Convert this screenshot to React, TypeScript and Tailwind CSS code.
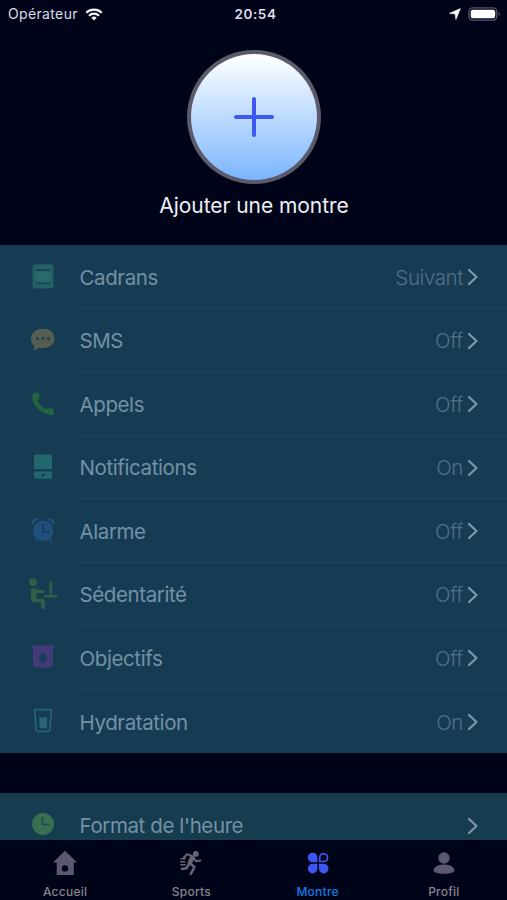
import type { ReactNode } from 'react'

type RowProps = {
  icon: ReactNode
  label: string
  value?: string
  last?: boolean
}

const DialIcon = () => (
  <svg viewBox="0 0 32 32" className="size-8">
    <rect x="5.5" y="3.2" width="21" height="24.3" rx="3.5" fill="#246067" />
    <rect x="8" y="11.5" width="16" height="9" rx="2" fill="#296b6c" />
    <path d="M9.500 9h13M9.500 22.300h13" stroke="#174753" strokeWidth="1.800" strokeLinecap="round" />
  </svg>
)

const SmsIcon = () => (
  <svg viewBox="0 0 32 32" className="size-8">
    <path d="M16 4.800c7 0 11.500 4 11.500 9.800S23 24 16 24c-1.600 0-2.600-.1-4-.5-1.700 1.600-3.300 2.600-5.500 3 .9-1.300 1.100-2.600 1-4.300C5.300 20.500 4 18 4 14.600 4 8.800 9 4.800 16 4.800z" fill="#535d52" />
    <g fill="#163c53">
      <circle cx="10.500" cy="14.600" r="1.400" />
      <circle cx="16" cy="14.600" r="1.400" />
      <circle cx="21.500" cy="14.600" r="1.400" />
    </g>
  </svg>
)

const CallIcon = () => (
  <svg viewBox="0 0 32 32" className="size-8">
    <path d="M6 6c1.500-1.800 4.500-2.300 5.700-.3 1.500 2.500 1.300 5-.9 6.800 1.200 4 4.200 7.300 8.600 8.600 1.900-1.500 5-1.600 7.300.2.400 1.300.7 3.900-.2 6-2.500-.4-5-.6-8.200-1.800C11.500 22.600 7 17.500 5.400 11.500c-.5-2-.4-4.300.6-5.500z" fill="#236440" />
  </svg>
)

const NotificationIcon = () => (
  <svg viewBox="0 0 32 32" className="size-8">
    <path d="M9 3.600h14a2 2 0 0 1 2 2V18H7V5.600a2 2 0 0 1 2-2zM7 20.500h18v5.300a2 2 0 0 1-2 2H9a2 2 0 0 1-2-2z" fill="#22666e" />
    <circle cx="16" cy="24" r="1.600" fill="#163c53" />
  </svg>
)

const AlarmIcon = () => (
  <svg viewBox="0 0 32 32" className="size-8">
    <path d="M6 8.500c-.6-2.600 2-4.600 4.800-3.700M26.400 8.500c.6-2.600-2-4.600-4.800-3.700" fill="none" stroke="#21567a" strokeWidth="2" strokeLinecap="round" />
    <circle cx="16.200" cy="16" r="10.200" fill="#204f7b" />
    <path d="M10 24 9 26M22.500 24l1 2" stroke="#204f7b" strokeWidth="2.200" strokeLinecap="round" />
    <path d="M16.200 9v7.800h6.500" fill="none" stroke="#163c5a" strokeWidth="1.700" />
  </svg>
)

const SedentaryIcon = () => (
  <svg viewBox="0 0 32 32" className="size-8">
    <circle cx="6" cy="4.200" r="3.900" fill="#315f45" />
    <path d="M4 10.500h5c1 0 1.500.8 2 1.500h6.500v3H9.500v6H16q1.700 0 1.700 1.700V31h-3.500v-6.800H6q-2 0-2-2z" fill="#315f45" />
    <path d="M23.700 4v13M18.500 18.200h11" stroke="#315f45" strokeWidth="2.500" strokeLinecap="round" />
  </svg>
)

const GoalIcon = () => (
  <svg viewBox="0 0 32 32" className="size-8">
    <path d="M5 3.600h22v2.400h-1V23q0 1.500-1.600 1.900l-5.400.4-3 1.200-3-1.200-5.400-.4Q6 24.500 6 23V6H5z" fill="#443a77" />
    <path d="m16 11 3.600 3v4.500L16 21.500l-3.600-3V14z" fill="#183c5c" />
  </svg>
)

const WaterIcon = () => (
  <svg viewBox="0 0 32 32" className="size-8">
    <path d="M7.700 4.700h16.600l-1.400 19.600q-.2 2.200-2.200 2.200h-9.400q-2 0-2.200-2.200z" fill="none" stroke="#24656f" strokeWidth="1.700" strokeLinejoin="round" />
    <path d="m12.200 12 4 .8 4-.8-.4 11.300h-7.200z" fill="#2a6474" />
  </svg>
)

const ClockIcon = () => (
  <svg viewBox="0 0 32 32" className="size-8">
    <circle cx="16" cy="15" r="11" fill="#3a6e50" />
    <path d="M15.500 8.500v7h6.500" fill="none" stroke="#1e4c4d" strokeWidth="1.700" strokeLinecap="round" />
  </svg>
)

const Chevron = () => (
  <svg viewBox="0 0 12 18" className="ml-1 mt-[2px] h-[18px] w-3">
    <path d="m2 2 7.500 7L2 16" fill="none" stroke="#7c99aa" strokeWidth="2.200" strokeLinecap="round" strokeLinejoin="round" />
  </svg>
)

const Row = ({ icon, label, value, last }: RowProps) => (
  <div className="flex h-[63.5px] shrink-0 pl-[27px]">
    <div className="flex w-[52.5px] items-center">{icon}</div>
    <div className={`flex flex-1 items-center justify-between pr-7 text-[20.5px] leading-7 tracking-[-0.4px] ${last ? '' : 'border-b border-[#1d4561]'}`}>
      <span className="pt-[3px] text-[#7391a5]">{label}</span>
      <span className="flex items-center font-light text-[#507086]">
        <span className="pt-[3px]">{value}</span>
        <Chevron />
      </span>
    </div>
  </div>
)

const Tab = ({ icon, label, active }: { icon: ReactNode; label: string; active?: boolean }) => (
  <button className="flex flex-1 flex-col items-center pt-[9px]">
    {icon}
    <span className={`mt-[7px] text-[12px] font-medium leading-4 tracking-[0.25px] ${active ? 'text-[#157bea]' : 'text-[#85858d]'}`}>{label}</span>
  </button>
)

const StatusBar = () => (
  <div className="grid h-7 grid-cols-3 items-center pl-2 pr-[6px] text-[13.5px] leading-5 text-[#d9dde8]">
    <div className="flex items-center">
      <span className="text-[14px] tracking-[0.350px]">Opérateur</span>
      <svg viewBox="0 0 18 13" className="ml-[7px] h-[13px] w-[18px]" fill="none" stroke="#f4f6fa" strokeWidth="2.200">
        <path d="M1.200 4.700a11.200 11.200 0 0 1 15.600 0M4 7.700a7.200 7.200 0 0 1 10 0" />
        <path d="m9 12.500-2.700-2.700a4 4 0 0 1 5.400 0z" fill="#f4f6fa" stroke="none" />
      </svg>
    </div>
    <span className="pl-[2px] text-center font-semibold tracking-[0.6px]">20:54</span>
    <div className="flex items-center justify-end">
      <svg viewBox="0 0 12 12" className="mr-[7px] size-3" fill="#fff" stroke="#fff" strokeWidth=".6" strokeLinejoin="round">
        <path d="M11.400.6 6.900 11.400 6.200 6 .6 5.300z" />
      </svg>
      <svg viewBox="0 0 33 14" className="h-[14px] w-[33px]">
        <rect x=".9" y=".9" width="28" height="12.200" rx="4" fill="none" stroke="#53576a" strokeWidth="1.400" />
        <rect x="2.700" y="2.700" width="24.500" height="8.600" rx="2.300" fill="#fff" />
        <path d="M30.800 5c1.500.6 1.500 3.400 0 4z" fill="#53576a" />
      </svg>
    </div>
  </div>
)

const HomeIcon = () => (
  <svg viewBox="0 0 28 28" className="size-7">
    <path fillRule="evenodd" d="M14 1.800 26.200 13.500H22.800V26H5.700V13.500H2zM14 16.200a3.200 3.200 0 1 0 0 6.400 3.200 3.200 0 0 0 0-6.400z" fill="#5c596f" />
  </svg>
)

const SportsIcon = () => (
  <svg viewBox="0 0 28 28" className="size-7" fill="none" stroke="#686576" strokeLinecap="round" strokeLinejoin="round">
    <circle cx="18.800" cy="4.900" r="2.900" fill="#686576" stroke="none" />
    <path d="M15.200 8.500 12.800 14" strokeWidth="4.500" />
    <path d="M14.500 6.800 9.800 5.300 7 8.500M16.800 9l2.200 3.200 4.500-.8" strokeWidth="2" />
    <path d="m13 14.500 4.500 3.500-3.800 7M11.500 15.500 9.500 19.300 5 20" strokeWidth="2.500" />
    <path d="M3.800 9.700h4.500M3.800 12.700h4M3.800 15.700h4.500" strokeWidth="1.400" />
  </svg>
)

const WatchIcon = () => (
  <svg viewBox="0 0 28 28" className="size-7" fill="#3f56f5">
    <path d="M13.400 13.300H8.600a4.800 4.800 0 1 1 4.800-4.800z" />
    <path d="M15.700 12.500V8.500a3.900 3.900 0 1 1 3.900 4z" fill="none" stroke="#3f56f5" strokeWidth="1.700" />
    <path d="M13.400 14.800v4.800a4.800 4.800 0 1 1-4.800-4.800zM14.900 14.800h4.800a4.800 4.800 0 1 1-4.800 4.800z" />
  </svg>
)

const ProfileIcon = () => (
  <svg viewBox="0 0 28 28" className="size-7" fill="#5c596f">
    <circle cx="14" cy="9" r="5.700" />
    <path d="M3.500 21.800c0-4 4.600-6.300 10.500-6.300s10.500 2.300 10.500 6.300c0 1.900-4.500 3-10.500 3s-10.500-1.100-10.500-3z" />
  </svg>
)

const App = () => (
  <div className="flex h-[900px] w-[507px] flex-col overflow-hidden bg-[#000418] font-['Inter','Liberation_Sans',sans-serif]">
    <StatusBar />
    <header className="flex h-[217px] shrink-0 flex-col items-center pt-[22px]">
      <button className="flex size-[134px] items-center justify-center rounded-full bg-[#5b5a6b] p-1">
        <span className="flex size-full items-center justify-center rounded-full bg-linear-to-b from-white to-[#7bb5ff]">
          <svg viewBox="0 0 42 42" className="size-[42px]">
            <path d="M21 3v36M3 21h36" stroke="#3d59f2" strokeWidth="4" strokeLinecap="round" />
          </svg>
        </span>
      </button>
      <p className="mt-[8px] pl-px text-[21px] leading-7 tracking-[-0.05px] text-[#eef0f6]">Ajouter une montre</p>
    </header>

    <main className="flex min-h-0 flex-1 flex-col gap-10 overflow-hidden">
      <section className="shrink-0 bg-[#163c53]">
        <Row icon={<DialIcon />} label="Cadrans" value="Suivant" />
        <Row icon={<SmsIcon />} label="SMS" value="Off" />
        <Row icon={<CallIcon />} label="Appels" value="Off" />
        <Row icon={<NotificationIcon />} label="Notifications" value="On" />
        <Row icon={<AlarmIcon />} label="Alarme" value="Off" />
        <Row icon={<SedentaryIcon />} label="Sédentarité" value="Off" />
        <Row icon={<GoalIcon />} label="Objectifs" value="Off" />
        <Row icon={<WaterIcon />} label="Hydratation" value="On" last />
      </section>
      <section className="shrink-0 bg-[#163c50]">
        <Row icon={<ClockIcon />} label="Format de l'heure" last />
      </section>
    </main>

    <nav className="flex h-[60px] shrink-0 bg-[#000418] pl-[2px]">
      <Tab icon={<HomeIcon />} label="Accueil" />
      <Tab icon={<SportsIcon />} label="Sports" />
      <Tab icon={<WatchIcon />} label="Montre" active />
      <Tab icon={<ProfileIcon />} label="Profil" />
    </nav>
  </div>
)

export default App
